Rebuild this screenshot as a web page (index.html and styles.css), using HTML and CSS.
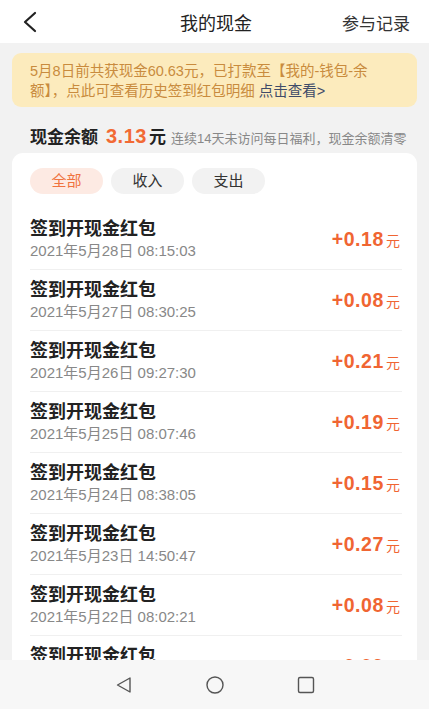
FILE: index.html
```html
<!DOCTYPE html>
<html>
    <head>
        <meta charset="utf-8">
        <title>我的现金</title>
        <link rel="stylesheet" href="styles.css">
    </head>
    <body>
        <div class="topbar">
            <span class="back">
                <svg width="16" height="22" viewBox="0 0 16 22"><path d="M13 2 L3 11 L13 20" fill="none" stroke="#222" stroke-width="2.2" stroke-linecap="round" stroke-linejoin="round"/></svg>
            </span>
            <span class="title">我的现金</span>
            <span class="record">参与记录</span>
        </div>

        <div class="main">
            <div class="notice">5月8日前共获现金60.63元，已打款至【我的-钱包-余额】，点此可查看历史签到红包明细 <span class="notice-link">点击查看&gt;</span></div>

            <div class="balance">
                <span class="balance-label">现金余额</span>
                <span class="balance-num">3.13</span><span class="balance-unit">元</span>
                <span class="balance-tip">连续14天未访问每日福利，现金余额清零</span>
            </div>

            <div class="card">
                <div class="tabs">
                    <span class="tab active">全部</span>
                    <span class="tab">收入</span>
                    <span class="tab">支出</span>
                </div>
                <div class="list">
                    <div class="row"><div><div class="row-title">签到开现金红包</div><div class="row-date">2021年5月28日 08:15:03</div></div><div class="amount">+0.18<small>元</small></div></div>
                    <div class="row"><div><div class="row-title">签到开现金红包</div><div class="row-date">2021年5月27日 08:30:25</div></div><div class="amount">+0.08<small>元</small></div></div>
                    <div class="row"><div><div class="row-title">签到开现金红包</div><div class="row-date">2021年5月26日 09:27:30</div></div><div class="amount">+0.21<small>元</small></div></div>
                    <div class="row"><div><div class="row-title">签到开现金红包</div><div class="row-date">2021年5月25日 08:07:46</div></div><div class="amount">+0.19<small>元</small></div></div>
                    <div class="row"><div><div class="row-title">签到开现金红包</div><div class="row-date">2021年5月24日 08:38:05</div></div><div class="amount">+0.15<small>元</small></div></div>
                    <div class="row"><div><div class="row-title">签到开现金红包</div><div class="row-date">2021年5月23日 14:50:47</div></div><div class="amount">+0.27<small>元</small></div></div>
                    <div class="row"><div><div class="row-title">签到开现金红包</div><div class="row-date">2021年5月22日 08:02:21</div></div><div class="amount">+0.08<small>元</small></div></div>
                    <div class="row"><div><div class="row-title">签到开现金红包</div><div class="row-date">2021年5月21日 08:11:36</div></div><div class="amount">+0.09<small>元</small></div></div>
                </div>
            </div>
        </div>

        <div class="navbar">
            <svg width="20" height="20" viewBox="0 0 20 20"><path d="M16 3 L3.5 10 L16 17 Z" fill="none" stroke="#555" stroke-width="1.4" stroke-linejoin="round"/></svg>
            <svg width="20" height="20" viewBox="0 0 20 20"><circle cx="10" cy="10" r="8" fill="none" stroke="#555" stroke-width="1.4"/></svg>
            <svg width="20" height="20" viewBox="0 0 20 20"><rect x="2.5" y="2.5" width="15" height="15" rx="1.5" fill="none" stroke="#555" stroke-width="1.4"/></svg>
        </div>
    </body>
</html>
```

FILE: styles.css
```css
html, body {
    margin: 0;
    height: 100%;
}
body {
    width: 429px;
    height: 709px;
    overflow: hidden;
    display: flex;
    flex-direction: column;
    background: #f2f2f2;
    font-family: "Liberation Sans", "Noto Sans CJK SC", sans-serif;
    color: #222;
}
.topbar {
    height: 43px;
    flex: none;
    background: #fff;
    display: flex;
    align-items: center;
    justify-content: space-between;
    padding: 1px 19px 0 22px;
    box-sizing: border-box;
}
.back {
    width: 70px;
    display: flex;
    align-items: center;
}
.title {
    font-size: 18px;
    color: #222;
}
.record {
    width: 70px;
    font-size: 17px;
    color: #333;
    text-align: right;
}
.main {
    flex: 1;
    overflow: hidden;
    padding: 10px 12px 0;
    display: flex;
    flex-direction: column;
}
.notice {
    background: #fcebbd;
    border-radius: 9px;
    padding: 8px 20px 6px 18px;
    font-size: 14.5px;
    line-height: 20px;
    color: #c98b3e;
}
.notice-link {
    color: #3f4b69;
}
.balance {
    padding: 16px 0 0 18px;
    height: 30px;
    display: flex;
    align-items: baseline;
    white-space: nowrap;
}
.balance-label {
    font-size: 17px;
    font-weight: bold;
    color: #222;
}
.balance-num {
    font-size: 20px;
    font-weight: bold;
    color: #f26a35;
    margin-left: 8px;
    letter-spacing: 0.5px;
}
.balance-unit {
    font-size: 17px;
    font-weight: bold;
    margin-left: 2px;
}
.balance-tip {
    font-size: 13px;
    color: #888;
    margin-left: 5px;
}
.card {
    flex: 1;
    background: #fff;
    border-radius: 11px 11px 0 0;
    padding: 15px 15px 0 18px;
    overflow: hidden;
}
.tabs {
    display: flex;
    gap: 8px;
}
.tab {
    width: 73px;
    height: 26px;
    line-height: 26px;
    border-radius: 13px;
    background: #f2f2f2;
    font-size: 15px;
    color: #333;
    text-align: center;
}
.tab.active {
    background: #fdeae3;
    color: #f0733f;
}
.list {
    margin-top: 15px;
}
.row {
    display: flex;
    justify-content: space-between;
    align-items: center;
    padding: 9px 0 8px;
    border-bottom: 1px solid #f0f0f0;
}
.row-title {
    font-size: 18px;
    font-weight: bold;
    line-height: 22px;
    color: #222;
}
.row-date {
    font-size: 15px;
    line-height: 21px;
    color: #888;
}
.amount {
    font-size: 19.5px;
    font-weight: bold;
    color: #f06532;
    margin-right: 2px;
    letter-spacing: 0.6px;
}
.amount small {
    font-size: 14px;
    font-weight: normal;
    margin-left: 2px;
    letter-spacing: 0;
}
.navbar {
    height: 49px;
    flex: none;
    background: #f7f7f7;
    display: flex;
    align-items: center;
    justify-content: center;
    gap: 71px;
}
```
